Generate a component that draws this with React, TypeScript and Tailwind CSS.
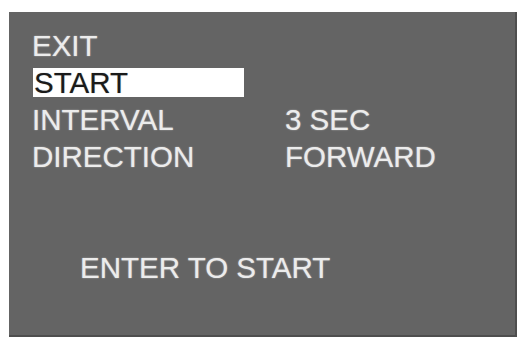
import React from "react";

export default function App() {
  const font = { fontFamily: '"Liberation Sans", Arial, sans-serif' };
  return (
    <div className="w-[520px] h-[340px] bg-white overflow-hidden pt-[12px] pl-[9px]" style={font}>
      <div className="w-[508px] h-[325px] bg-[#646464] border-r-2 border-b-2 border-[#4e4e4e] pt-[15px] pl-[23px] text-[29.5px] leading-[37px] text-[#ececec] [text-shadow:0_0_1.5px_rgba(255,255,255,0.6)]">
        <div className="grid grid-cols-[253px_1fr]">
          <div className="h-[37px]">EXIT</div>
          <div />
          <div className="h-[37px] flex items-center">
            <div className="ml-[1px] w-[211px] h-[29px] bg-white text-[#1a1a1a] leading-[29px] pl-[1px] [text-shadow:0_0_1px_rgba(0,0,0,0.4)]">START</div>
          </div>
          <div />
          <div className="h-[37px]">INTERVAL</div>
          <div className="h-[37px]">3 SEC</div>
          <div className="h-[37px]">DIRECTION</div>
          <div className="h-[37px]">FORWARD</div>
        </div>
        <div className="mt-[74px] pl-[48px] h-[37px]">ENTER TO START</div>
      </div>
    </div>
  );
}
